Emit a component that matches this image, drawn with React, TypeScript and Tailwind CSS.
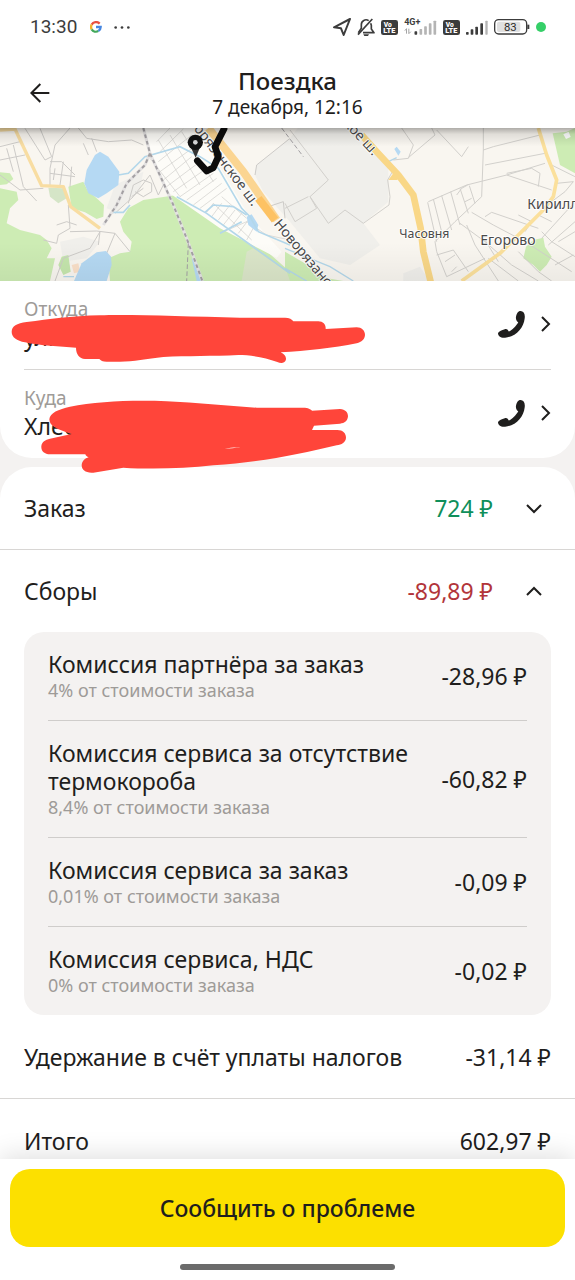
import { useState } from "react";
import type { ReactNode } from "react";

type Fee = {
  title: string;
  note: string;
  amount: string;
};

const fees: Fee[] = [
  { title: "Комиссия партнёра за заказ", note: "4% от стоимости заказа", amount: "-28,96 ₽" },
  {
    title: "Комиссия сервиса за отсутствие термокороба",
    note: "8,4% от стоимости заказа",
    amount: "-60,82 ₽",
  },
  { title: "Комиссия сервиса за заказ", note: "0,01% от стоимости заказа", amount: "-0,09 ₽" },
  { title: "Комиссия сервиса, НДС", note: "0% от стоимости заказа", amount: "-0,02 ₽" },
];

const VoLte = () => (
  <svg viewBox="0 0 51 45" className="w-[17px] h-[15px]" aria-hidden="true">
    <rect width="51" height="45" rx="7" fill="#3c3c3c" />
    <g fill="#fff" fontFamily="Roboto, sans-serif" fontWeight="900">
      <text x="8" y="20" fontSize="20">Vo</text>
      <text x="7" y="40" fontSize="22">LTE</text>
    </g>
  </svg>
);

const StatusBar = () => (
  <div className="flex items-center justify-between h-[54px] pl-[30px] pr-[29px]">
    <div className="flex items-center text-[#3c3c3c]">
      <span className="font-[Roboto,sans-serif] text-[19px]">13:30</span>
      <svg viewBox="0 0 36 36" className="w-3 h-3 ml-[13px]" aria-hidden="true">
        <g fill="none" strokeWidth="7">
          <path d="M29 8A15 15 0 0 0 5 11" stroke="#e8503f" />
          <path d="M5 11A15 15 0 0 0 5 25" stroke="#f2b32c" />
          <path d="M5 25A15 15 0 0 0 25 30" stroke="#41a85a" />
          <path d="M25 30A14 14 0 0 0 32 18H18" stroke="#4686e0" />
        </g>
      </svg>
      <svg viewBox="0 0 48 9" className="w-4 h-[3px] ml-3" fill="#3c3c3c" aria-hidden="true">
        <circle cx="5" cy="4.500" r="4" />
        <circle cx="24" cy="4.500" r="4" />
        <circle cx="43" cy="4.500" r="4" />
      </svg>
    </div>
    <div className="flex items-center gap-1.5">
      <svg viewBox="0 0 54 54" className="w-[18px] h-[18px]" aria-hidden="true">
        <path
          d="M51 3L3 28L24 31L32 51Z"
          fill="none"
          stroke="#3c3c3c"
          strokeWidth="6"
          strokeLinejoin="round"
        />
      </svg>
      <svg viewBox="0 0 54 57" className="w-[18px] h-[19px]" aria-hidden="true">
        <g fill="none" stroke="#3c3c3c" strokeWidth="5" strokeLinejoin="round">
          <path d="M35 8A14 14 0 0 0 13 20V31L4 44M18 44H51L43 33V22L41 16" />
          <path d="M46 3L3 50" />
        </g>
        <path d="M19 49H36L33 54H22Z" fill="#3c3c3c" />
      </svg>
      <VoLte />
      <svg viewBox="0 0 98 54" className="w-[33px] h-[18px]" aria-hidden="true">
        <text
          x="0"
          y="20"
          fontSize="27"
          fontWeight="700"
          fontFamily="Roboto, sans-serif"
          fill="#3c3c3c"
        >
          4G+
        </text>
        <path d="M2 38L7 32V47M14 32V47L20 41" fill="none" stroke="#a5a5a5" strokeWidth="3" />
        <rect x="31" y="40" width="8" height="10" rx="2" fill="#3c3c3c" />
        <g fill="#b4b4b4">
          <rect x="46" y="33" width="8" height="17" rx="2" />
          <rect x="60" y="25" width="8" height="25" rx="2" />
          <rect x="74" y="16" width="8" height="34" rx="2" />
          <rect x="88" y="8" width="8" height="42" rx="2" />
        </g>
      </svg>
      <VoLte />
      <svg viewBox="0 0 66 54" className="w-[22px] h-[18px]" aria-hidden="true">
        <g fill="#3c3c3c">
          <rect x="0" y="42" width="8" height="8" rx="2" />
          <rect x="14" y="34" width="8" height="16" rx="2" />
          <rect x="28" y="26" width="8" height="24" rx="2" />
          <rect x="43" y="16" width="8" height="34" rx="2" />
        </g>
        <rect x="58" y="8" width="7" height="42" rx="2" fill="#b4b4b4" />
      </svg>
      <svg viewBox="0 0 108 48" className="w-9 h-4" aria-hidden="true">
        <rect x="2" y="2" width="96" height="43" rx="12" fill="#fff" stroke="#3c3c3c" strokeWidth="4" />
        <rect x="9" y="8" width="70" height="31" rx="6" fill="#e0e0e0" />
        <path d="M103 17V30" stroke="#3c3c3c" strokeWidth="6" />
        <text
          x="49"
          y="35"
          fontSize="34"
          fontFamily="Roboto, sans-serif"
          textAnchor="middle"
          fill="#2c2c2c"
        >
          83
        </text>
      </svg>
      <span className="w-2.5 h-2.5 rounded-full bg-[#35cf68]" />
    </div>
  </div>
);

const RouteMap = () => (
  <svg
    viewBox="0 9 1725 459"
    preserveAspectRatio="xMidYMid slice"
    className="block w-full h-[153px]"
    role="img"
    aria-label="Карта маршрута"
  >
    <defs>
      <linearGradient id="mapShade" x1="0" y1="0" x2="0" y2="1">
        <stop offset="0" stopColor="#000" stopOpacity="0.3" />
        <stop offset="0.04" stopColor="#000" stopOpacity="0.1" />
        <stop offset="0.12" stopColor="#000" stopOpacity="0" />
        <stop offset="0.75" stopColor="#000" stopOpacity="0" />
        <stop offset="1" stopColor="#000" stopOpacity="0.05" />
      </linearGradient>
    </defs>
    <rect width="1725" height="480" fill="#f9f6f0" />

    {/* industrial zones */}
    <g fill="#f0efeb">
      <path d="M765 150L770 120L870 40L900 0H1050L1165 110V230L1090 295L1140 360L1050 420L960 400L870 290L790 200Z" />
      <path d="M345 180L430 140L420 190L350 260L320 250Z" />
      <path d="M180 350L250 335L300 350L260 400L190 410Z" />
      <path d="M1210 445L1260 425L1290 470H1210Z" />
    </g>

    {/* forests */}
    <g fill="#cdecb4">
      <path d="M0 190L50 200L55 225L30 250L20 295L60 315L120 330L140 345L155 370L140 400L165 400L150 468H0Z" />
      <path d="M0 142L30 145L40 162L20 178L0 180Z" />
      <path d="M330 468L325 400L360 385L390 380L395 350L370 320L360 290L385 250L430 225L530 210L700 310L790 370L870 440L1030 468Z" />
      <path d="M205 185L250 170L262 195L290 220L312 240L310 275L290 282L255 262L215 250Z" />
      <path d="M855 380L940 430L980 468H855Z" />
      <path d="M1658 25L1700 20L1725 9V145L1680 120Z" />
      <path d="M1578 365L1600 345L1630 338L1635 365L1655 395L1640 420L1620 440L1600 420L1570 400Z" />
    </g>
    <path d="M145 188L190 190L200 220L175 235L150 215Z" fill="#d5e5c7" />
    <path d="M740 380L760 370L860 440L870 468H725Z" fill="#dbe6c9" />
    <path d="M185 395L205 390L212 440L190 450L175 420Z" fill="#c5e6ad" />
    <path d="M215 420L235 415L240 440L222 445Z" fill="#fae0c8" />

    {/* garden plots */}
    <path d="M470 9H595L650 110L745 270L845 380L830 398L660 310L495 195L450 90L430 9Z" fill="#fdfcf8" />
    <g fill="none" stroke="#cfcdca" strokeWidth="2">
      <path d="M470 50L510 9M480 80L550 12M475 110L575 30M480 140L590 60M490 165L575 95M500 185L600 110M520 200L620 130M540 215L640 145M560 225L650 160M580 240L665 175M600 250L680 190" />
      <path d="M620 262L640 235M635 275L665 235M655 285L690 240M670 300L705 255M690 310L725 265M715 325L745 285M740 345L765 300" />
      <path d="M475 45L560 190M510 30L600 180M545 20L640 170M640 235L755 345M665 215L740 280M450 100L540 215" />
      <path d="M660 325L740 290L800 330L870 345" />
    </g>

    {/* minor streets */}
    <g fill="none" stroke="#cdcbc8" strokeWidth="3">
      <path d="M0 65L60 50M0 105L75 90M75 10L135 105L155 95L120 10M40 60L70 185L110 228M20 70L40 140M0 150L60 195L130 190" />
      <path d="M210 9L165 60L150 130V180M235 9L260 40L325 50L395 45L430 60M250 55L265 90M275 40L290 80" />
      <path d="M150 110H185L225 150M150 145L225 155M165 130L160 165M190 110L180 180M215 125L210 185" />
      <path d="M205 240L210 310L175 330L170 355L130 345M170 300L200 290L230 300M210 320L290 318L345 325L390 380M345 325L320 385M300 320L270 370L190 400L165 468M300 320L295 360" />
      <path d="M385 235L400 180L430 165L455 175V200L430 215L405 200M395 215L430 190M345 265L400 215L450 150L475 210L490 180" />
      <path d="M765 150L770 120L870 40M790 250L850 230L855 280" />
    </g>

    {/* lakes and streams */}
    <g fill="#b5d9f3">
      <path d="M285 90L300 80L325 95L358 140L355 180L320 205L295 220L265 205L253 175L260 135Z" />
      <path d="M222 468L245 415L290 382L318 378L333 395L335 420L320 468Z" />
      <path d="M740 275L755 268L775 300L770 320L745 300Z" />
      <path d="M575 400L590 410L610 468H590Z" />
      <path d="M1183 72L1190 65L1202 80L1195 92Z" />
    </g>
    <g fill="none" stroke="#b3d7ea" strokeWidth="5">
      <path d="M355 150L385 145L410 120L435 95L540 65L600 95L655 130L725 250L750 275L775 320L870 360" />
      <path d="M530 215L620 265L870 445M615 262L640 240L700 245L740 270M660 325L725 290M335 262L370 262L390 240" />
      <path d="M855 370L990 425L1060 468M855 430L920 468" strokeWidth="4" />
      <path d="M190 455H222M1165 110L1190 98" strokeWidth="4" />
    </g>

    {/* streets of the eastern villages */}
    <g fill="none" stroke="#d2d0cc" strokeWidth="3" transform="translate(855 0)">
      <path d="M15 15L130 165L75 215L130 295L180 255L235 295L312 240L315 215L308 165L325 135M0 235L30 290L95 250L75 215M0 250L70 215" />
      <path d="M350 9L385 60L370 100L325 105M370 98L450 30L440 9M455 15L530 95L550 65M595 9V75L590 215L510 290L450 350L455 380L485 455L600 400" />
      <path d="M595 75L625 65L765 30M600 120L780 85M430 230L545 180L665 150L780 115M665 150L800 195M665 145L740 130L765 145L760 185M800 120L870 155M815 175L865 170L840 200L800 230" />
      <path d="M428 232L455 350M445 222L475 340M470 212L500 315M497 200L525 300M525 190L550 265M553 182L570 235M540 230L560 220M515 210L530 190L548 180" />
      <path d="M455 390L505 375L550 440M480 410L510 390M500 440L515 425M525 295L600 350L680 420L760 468M560 262L625 300L720 350L860 440M600 275L620 262L760 310M600 345L640 410M545 300L570 360L640 468M610 400L700 468" />
      <path d="M740 290L760 270L800 290M770 340L870 230M790 360L870 290M770 320L800 350L870 395M700 380L760 440L800 468M820 350L870 320M810 420L865 390M700 270L740 290L720 320" />
    </g>
    <path d="M1690 28L1706 20L1712 36L1698 42Z" fill="#fff" />

    {/* main roads */}
    <g fill="none" strokeLinejoin="round">
      <path d="M0 15L45 12L125 182L190 185L212 245L300 310" stroke="#f8dda2" strokeWidth="10" />
      <path d="M625 9L730 140L830 285" stroke="#fbd592" strokeWidth="24" />
      <path d="M775 220L825 285" stroke="#fdc263" strokeWidth="24" />
      <path d="M1085 30L1130 80L1195 150L1240 210L1262 310L1270 380L1292 470" stroke="#f9d787" strokeWidth="20" />
      <path d="M1165 165L1180 145L1210 155L1190 165Z" fill="#f9d787" />
      <path d="M1615 9L1640 90L1670 165L1660 215L1630 255L1500 385L1385 468" stroke="#fbe09c" strokeWidth="11" />
    </g>

    {/* railways */}
    <g fill="none">
      <path d="M430 9L450 85L520 240L560 340L607 468" stroke="#e4e2e2" strokeWidth="9" />
      <path d="M450 85L435 120L380 175L350 240L310 300" stroke="#e4e2e2" strokeWidth="9" />
      <path
        d="M430 9L450 85L520 240L560 340L607 468M450 85L435 120L380 175L350 240L310 300"
        stroke="#a3a0a3"
        strokeWidth="6"
        strokeDasharray="11 9"
      />
      <path d="M565 355L560 468M845 9L910 95" stroke="#a3a0a3" strokeWidth="3" strokeDasharray="14 7" />
    </g>

    {/* place names */}
    <g
      fontFamily="'Noto Sans', sans-serif"
      fill="#4a4a4a"
      stroke="#fff"
      strokeWidth="5"
      paintOrder="stroke"
    >
      <text x="1198" y="338" fontSize="37">Часовня</text>
      <text x="1441" y="359" fontSize="42">Егорово</text>
      <text x="1582" y="252" fontSize="42">Кирилл</text>
      <text transform="translate(566 -8) rotate(53)" fontSize="42">ворязанское ш.</text>
      <text transform="translate(820 298) rotate(50)" fontSize="42">Новорязанское</text>
      <text transform="translate(1016 -16) rotate(47)" fontSize="42">ское ш.</text>
    </g>

    {/* the route runs above the road name */}
    <path
      d="M672 12L645 65L655 95L640 128L620 138L592 107"
      fill="none"
      stroke="#0c0c0c"
      strokeWidth="20"
      strokeLinecap="round"
      strokeLinejoin="round"
    />
    <path d="M570 62L587 98L602 62Z" fill="#333" />
    <circle cx="586" cy="52" r="23" fill="#111" />
    <circle cx="586" cy="52" r="7" fill="#d9d9d9" />
    <rect y="9" width="1725" height="459" fill="url(#mapShade)" />
  </svg>
);

/* Marker strokes that hide both addresses */
const Redaction = () => (
  <svg
    viewBox="0 3 1140 600"
    className="absolute left-0 top-0 z-10 w-[380px] h-[200px] pointer-events-none"
    fill="#ff453a"
    aria-hidden="true"
  >
    <path d="M35 155C35 138 50 130 80 126C150 118 210 108 300 106C400 103 560 110 720 113H855C868 113 876 118 880 124H955C970 124 978 134 977 147L1070 142C1085 142 1095 152 1095 165C1094 178 1085 186 1070 190C1000 204 920 213 842 217C852 221 859 229 858 238C856 250 843 252 832 246C795 232 750 225 715 225C640 229 560 227 490 231C440 236 400 245 360 245H320C308 245 302 242 298 237H255C238 236 228 222 228 203C180 200 120 197 75 187C50 182 35 172 35 155Z" />
    <path
      fillRule="evenodd"
      d="M148 418C150 398 175 388 210 380C290 364 400 360 500 364C590 368 680 378 770 383H915C928 384 935 390 936 392L1020 387C1036 388 1044 397 1044 409C1043 422 1034 430 1020 431L942 437L936 450H1012C1029 450 1038 460 1038 473C1037 487 1025 494 1010 496C900 522 790 546 640 556C550 566 450 568 370 563L280 578C258 580 245 570 245 556C246 543 255 535 266 532C261 530 257 527 256 523H150C133 522 123 513 124 499C125 485 136 479 150 476L215 462C170 448 148 438 148 418ZM674 507C690 503 706 502 722 503C704 503 690 505 674 507Z"
    />
  </svg>
);

const PhoneIcon = () => (
  <svg viewBox="0 0 80 80" className="w-[27px] h-[27px]" fill="#1f1e1d" aria-hidden="true">
    <path d="M67 0C76 1 81 8 79 22C76 50 53 76 21 79C8 80 0 75 0 65C4 60 11 57 20 54C27 52 30 57 32 61C42 56 54 44 60 33C55 30 53 26 53 19C55 8 59 0 67 0Z" />
  </svg>
);

const Chevron = ({ d, className }: { d: string; className: string }) => (
  <svg
    viewBox="0 0 18 18"
    className={className}
    fill="none"
    stroke="#1f1e1d"
    strokeWidth="2"
    aria-hidden="true"
  >
    <path d={d} />
  </svg>
);

const Address = ({ label, value, cls = "" }: { label: string; value: string; cls?: string }) => (
  <div className={`flex items-center justify-between mx-6 pt-4 pb-[18px] ${cls}`}>
    <div>
      <div className="text-[19px] leading-6 text-[#9e9b98]">{label}</div>
      <div className="mt-0.5">{value}</div>
    </div>
    <div className="flex items-center gap-3">
      <button type="button" aria-label={`Позвонить: ${label}`}>
        <PhoneIcon />
      </button>
      <button type="button" aria-label={`Подробнее: ${label}`}>
        <Chevron d="M5 2L12 9L5 16" className="w-[18px] h-[18px] -mr-1" />
      </button>
    </div>
  </div>
);

const Row = ({ label, children }: { label: string; children: ReactNode }) => (
  <div className="flex items-center justify-between h-[83px] px-6">
    <span>{label}</span>
    {children}
  </div>
);

export default function App() {
  const [orderOpen, setOrderOpen] = useState(false);
  const [feesOpen, setFeesOpen] = useState(true);

  const toggle = (label: string, amount: string, color: string, open: boolean, onClick: () => void) => (
    <button
      type="button"
      aria-expanded={open}
      onClick={onClick}
      className="flex items-center justify-between w-full h-[82px] px-6 text-left"
    >
      <span>{label}</span>
      <span className="flex items-center gap-8">
        <span className={color}>{amount}</span>
        <Chevron d={open ? "M2 13L9 6L16 13" : "M2 6L9 13L16 6"} className="w-[18px] h-[18px] mr-2" />
      </span>
    </button>
  );

  return (
    <div className="flex flex-col h-screen bg-white text-[#1f1e1d] text-[23px] leading-7 font-['Noto_Sans',sans-serif]">
      <header className="shrink-0">
        <StatusBar />
        <div className="grid grid-cols-[80px_1fr_80px] items-center h-[74px] pt-1">
          <button type="button" aria-label="Назад" className="justify-self-start ml-[30px]">
            <svg
              viewBox="0 0 60 60"
              className="w-5 h-5"
              fill="none"
              stroke="#1f1e1d"
              strokeWidth="6"
              aria-hidden="true"
            >
              <path d="M58 30H4M31 3L4 30L31 57" />
            </svg>
          </button>
          <div className="text-center">
            <h1 className="text-[24px] leading-7 font-medium">Поездка</h1>
            <p className="text-[19px] leading-6">7 декабря, 12:16</p>
          </div>
        </div>
      </header>

      <main className="flex-1 min-h-0 overflow-y-auto [scrollbar-width:none] bg-[#f4f2f1]">
        <RouteMap />
        <section className="relative bg-white rounded-b-[32px]">
          <Address label="Откуда" value="ул." cls="border-b border-[#d8d6d4]" />
          <Address label="Куда" value="Хлеб" />
          <Redaction />
        </section>

        <section className="mt-[9px] bg-white rounded-t-[32px]">
          {toggle("Заказ", "724 ₽", "text-[#0f8f5b]", orderOpen, () => setOrderOpen(!orderOpen))}
          <div className="border-t border-[#d8d6d4]">
            {toggle("Сборы", "-89,89 ₽", "text-[#b2353a]", feesOpen, () => setFeesOpen(!feesOpen))}
          </div>
          {feesOpen && (
            <ul className="mx-6 px-6 rounded-[20px] bg-[#f4f2f1] divide-y divide-[#cfcdcb]">
              {fees.map((f) => (
                <li key={f.title} className="flex items-center justify-between gap-6 py-[18px]">
                  <div>
                    <div>{f.title}</div>
                    <div className="text-[18px] leading-6 text-[#9e9b98]">{f.note}</div>
                  </div>
                  <span className="whitespace-nowrap">{f.amount}</span>
                </li>
              ))}
            </ul>
          )}
          <Row label="Удержание в счёт уплаты налогов">
            <span className="whitespace-nowrap">-31,14 ₽</span>
          </Row>
          <div className="border-t border-[#d8d6d4]">
            <Row label="Итого">
              <span className="whitespace-nowrap">602,97 ₽</span>
            </Row>
          </div>
        </section>
      </main>

      <footer className="relative shrink-0 bg-white px-2.5 pt-2.5 pb-2.5 shadow-[0_-4px_24px_rgba(0,0,0,0.12)]">
        <button
          type="button"
          className="block w-full h-[78px] rounded-[20px] bg-[#fce000] text-[23px] font-medium"
        >
          Сообщить о проблеме
        </button>
        <div className="mx-auto mt-[17px] w-[215px] h-1.5 rounded-full bg-[#6b6b6b]" />
      </footer>
    </div>
  );
}
